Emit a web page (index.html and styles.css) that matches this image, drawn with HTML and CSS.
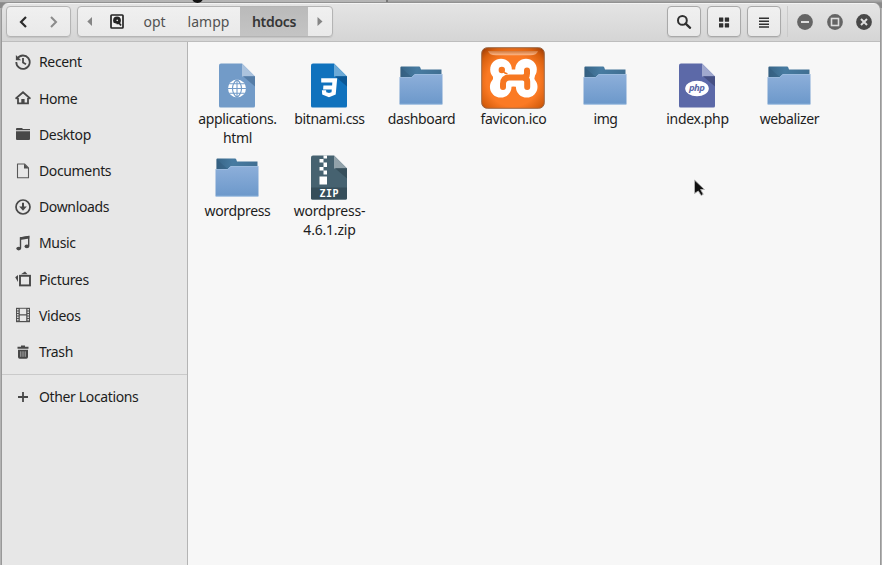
FILE: index.html
```html
<!DOCTYPE html>
<html lang="en">
<head>
<meta charset="utf-8">
<title>htdocs</title>
<link rel="stylesheet" href="styles.css">
</head>
<body>
<svg class="defs" width="0" height="0">
  <defs>
    <linearGradient id="front" x1="0" y1="0" x2="0" y2="1"><stop offset="0" stop-color="#8dafda"/><stop offset="1" stop-color="#6c98ca"/></linearGradient>
    <linearGradient id="back" x1="0" y1="0" x2="1" y2="0"><stop offset="0" stop-color="#386587"/><stop offset=".4" stop-color="#477ba1"/><stop offset="1" stop-color="#416f92"/></linearGradient>
    <radialGradient id="orange" cx=".5" cy=".55" r=".7"><stop offset=".6" stop-color="#fb7a24"/><stop offset=".84" stop-color="#d9600f"/><stop offset="1" stop-color="#a54108"/></radialGradient>
    <linearGradient id="shine" x1="0" y1="0" x2="0" y2="1"><stop offset="0" stop-color="#d07a40"/><stop offset="1" stop-color="#ffb685"/></linearGradient>
    <symbol id="folder" viewBox="0 0 44 40">
      <path d="M1.500 16V2.200Q1.500 1.500 2.200 1.500H20Q21 1.500 21.300 2.500L22 4.500H42.500V16z" fill="url(#back)"/>
      <path d="M1.500 2l11 10H1.500z" fill="#2f5878" opacity=".4"/>
      <path d="M.5 12.200H12.500L15.500 9.200H43.500V39Q43.500 39.500 43 39.500H1Q.5 39.500.5 39z" fill="url(#front)"/>
      <path d="M.5 12.500H12.700L15.700 9.500H43.500M1 39.200H43" fill="none" stroke="#a9c5e6" stroke-width=".7"/>
    </symbol>
  </defs>
</svg>
<div class="backdrop"><span class="tab-edge"></span><span class="tab-dot"></span></div>
<div class="window">
  <header class="bar">
    <div class="group nav">
      <button class="back"><svg width="10" height="14" viewBox="0 0 10 14"><path d="M8 2L3 7l5 5" fill="none" stroke="#2b2b2b" stroke-width="2.2"/></svg></button>
      <button class="forward"><svg width="10" height="14" viewBox="0 0 10 14"><path d="M2 2l5 5-5 5" fill="none" stroke="#8b8b8b" stroke-width="2"/></svg></button>
    </div>
    <div class="group path">
      <button class="arrow"><svg width="6" height="9"><path d="M5 0v9L.3 4.500z" fill="#858585"/></svg></button>
      <button class="disk"><svg width="14" height="15" viewBox="0 0 14 15"><rect x="1" y="1" width="12" height="13" rx=".8" fill="#f2f2f2" stroke="#252525" stroke-width="1.700"/><circle cx="7" cy="6.400" r="3.900" fill="#252525"/><path d="M7.200 6.600l3.800 4.900" stroke="#252525" stroke-width="1.700"/><path d="M2.500 8.500l4.300 1.200-1.300 3.300H2.500z" fill="#f2f2f2"/><path d="M6.200 5.900l1.400-.3.600 1.200-1.200.5z" fill="#f2f2f2"/></svg></button>
      <button class="opt">opt</button>
      <button class="lampp">lampp</button>
      <button class="current">htdocs</button>
      <button class="arrow"><svg width="6" height="9"><path d="M.5 0v9l5-4.500z" fill="#858585"/></svg></button>
    </div>
    <div class="spacer"></div>
    <div class="tools">
      <button class="group tool"><svg width="16" height="16" viewBox="0 0 16 16"><circle cx="6.400" cy="6.400" r="4.400" fill="none" stroke="#303030" stroke-width="2"/><path d="M9.600 9.600l4.500 4.200" stroke="#303030" stroke-width="2.300" stroke-linecap="round"/></svg></button>
      <button class="group tool"><svg width="12" height="12" viewBox="0 0 12 12" fill="#303030"><rect x="1" y="1.400" width="4.300" height="4.300" rx=".4"/><rect x="6.800" y="1.400" width="4.300" height="4.300" rx=".4"/><rect x="1" y="7.200" width="4.300" height="4.300" rx=".4"/><rect x="6.800" y="7.200" width="4.300" height="4.300" rx=".4"/></svg></button>
      <button class="group tool"><svg width="12" height="12" viewBox="0 0 12 12"><path d="M1 2.300h10M1 5.300h10M1 8.300h10M1 11h10" stroke="#303030" stroke-width="1.500"/></svg></button>
    </div>
    <div class="controls">
      <svg width="16" height="16" viewBox="0 0 16 16"><circle cx="8" cy="8" r="7.900" fill="#656565"/><path d="M4 8h8" stroke="#dedede" stroke-width="2"/></svg>
      <svg width="16" height="16" viewBox="0 0 16 16"><circle cx="8" cy="8" r="7.900" fill="#656565"/><rect x="4.500" y="4.500" width="7" height="7" fill="none" stroke="#dedede" stroke-width="1.600"/></svg>
      <svg width="16" height="16" viewBox="0 0 16 16"><circle cx="8" cy="8" r="7.900" fill="#484848"/><path d="M5 5l6 6M11 5l-6 6" stroke="#dedede" stroke-width="2"/></svg>
    </div>
  </header>
  <div class="content">
    <nav class="sidebar">
      <a><svg viewBox="0 0 16 16"><path d="M2.400 4.500A6.700 6.700 0 1 1 1.300 8M8 4v4.500l3 1.800" fill="none" stroke="#484848" stroke-width="1.800"/><path d="M.9 1v5.200h5.200z" fill="#484848"/></svg><span>Recent</span></a>
      <a><svg viewBox="0 0 16 16"><path d="M.5 8.700L8 2.300l7.500 6.400M3 8v5.400h10V8" fill="none" stroke="#484848" stroke-width="1.800"/><path d="M6.300 13V9h3.300v4z" fill="#484848"/></svg><span>Home</span></a>
      <a><svg viewBox="0 0 16 16"><path d="M1 4V3q0-1 1-1h5l1 1h7v1.300H1zM1 5.200h14V13q0 1-1 1H2q-1 0-1-1z" fill="#484848"/></svg><span>Desktop</span></a>
      <a><svg viewBox="0 0 16 16"><path d="M2.500 1h7L13.500 5v9.800h-11z" fill="none" stroke="#585858" stroke-width="1.100" stroke-linejoin="round"/><path d="M9 1v4.500h4.800z" fill="#505050"/></svg><span>Documents</span></a>
      <a><svg viewBox="0 0 16 16"><circle cx="8" cy="8" r="7" fill="none" stroke="#484848" stroke-width="1.700"/><path d="M8 3.700v5" stroke="#484848" stroke-width="2"/><path d="M4.200 7.500h7.600L8 11.800z" fill="#484848"/></svg><span>Downloads</span></a>
      <a><svg viewBox="0 0 16 16"><path d="M5.500 13V2.800l8.200-1.200V11" fill="none" stroke="#484848" stroke-width="1.400"/><path d="M5 2.400l9.300-1.600v2.700L5 4.900z" fill="#484848"/><ellipse cx="3.700" cy="13.600" rx="2.400" ry="1.800" fill="#484848"/><ellipse cx="11.900" cy="11.400" rx="2.400" ry="1.800" fill="#484848"/></svg><span>Music</span></a>
      <a><svg viewBox="0 0 16 16"><rect x="5" y="4.800" width="10" height="9.600" fill="none" stroke="#484848" stroke-width="1.900"/><path d="M6 3.200l4-2.800 2.500 2.800zM3 4v7L.2 6.200z" fill="#484848"/></svg><span>Pictures</span></a>
      <a><svg viewBox="0 0 16 16"><path d="M1 .8h14v14.400H1z" fill="#505050"/><path d="M4.800 1.800h6.400v5.500H4.800zM4.800 8.500h6.400v5.600H4.800z" fill="#e7e7e7"/><path d="M2.800 2v12.500M13.200 2v12.500" stroke="#e7e7e7" stroke-width="1.400" stroke-dasharray="1.600 .9"/></svg><span>Videos</span></a>
      <a><svg viewBox="0 0 16 16"><path d="M6 1.500h4v1.200h3.500v2h-11v-2H6zM3 5.700h10V13q0 1.700-1.700 1.700H4.700Q3 14.700 3 13z" fill="#484848"/><path d="M5.800 7.300v5.500M8 7.300v5.500M10.200 7.300v5.500" stroke="#bcbcbc" stroke-width=".9"/></svg><span>Trash</span></a>
      <hr>
      <a><svg viewBox="0 0 16 16"><path d="M8 3v10M3 8h10" stroke="#484848" stroke-width="1.800"/></svg><span>Other Locations</span></a>
    </nav>
    <main class="files">
      <figure><svg width="36" height="45" viewBox="0 0 36 45"><path d="M2 .5h21L36 13.500V43q0 1.500-1.500 1.500h-33Q0 44.500 0 43V2.300Q0 .5 2 .5z" fill="#729bc8"/><path d="M23 .5l13 13H23z" fill="#abc3de"/><path d="M24 13.300h12V23.500z" fill="#557da7"/><circle cx="18" cy="25.500" r="9" fill="#fff"/><path d="M9 25.500h18M18 16v19M10.500 20.800h15M10.500 30.200h15M18 16.500c-6 5-6 13 0 18M18 16.500c6 5 6 13 0 18" fill="none" stroke="#729bc8" stroke-width="1.100"/></svg><figcaption>applications.<br>html</figcaption></figure>
      <figure><svg width="36" height="45" viewBox="0 0 36 45"><path d="M2 .5h21L36 13.500V43q0 1.500-1.500 1.500h-33Q0 44.500 0 43V2.300Q0 .5 2 .5z" fill="#1072bd"/><path d="M23 .5l13 13H23z" fill="#6caad7"/><path d="M24 13.300h12V23.500z" fill="#0b5795"/><path d="M10.200 15.300h16l-1.500 16.300-6.700 2.700-6.800-2.700-.3-4.300h4.200l.2 2 2.700.7 2.500-.7.300-2.700h-8.700l.3-4.100h8.700l.2-3H10.200z" fill="#fff"/></svg><figcaption>bitnami.css</figcaption></figure>
      <figure><svg class="folder" width="44" height="40"><use href="#folder"/></svg><figcaption>dashboard</figcaption></figure>
      <figure><svg class="favicon" width="64" height="62" viewBox="0 0 64 62"><rect x=".7" y=".7" width="62.600" height="60.600" rx="5.500" fill="url(#orange)" stroke="#9c6a49" stroke-width="1"/><path d="M7 4h50q-1 4.200-8 4.200H15Q8 8.200 7 4z" fill="url(#shine)"/><g fill="#fff"><circle cx="20" cy="22.500" r="10.800"/><circle cx="45" cy="22.500" r="10.800"/><circle cx="19.700" cy="39.800" r="10.800"/><circle cx="45.700" cy="39.800" r="10.800"/><path d="M12 28l2-6h14q4.500 1 9 0h13l4 6-1 6-2 6H37q-4.500-1-9 0H14l-2-6z"/></g><circle cx="20.800" cy="23" r="3.200" fill="#f67721"/><path d="M22 40v-3q0-6.500 6.500-6.500h13q4.500 0 4.500-4V23.500M42 30.500q4 .5 4.200 4v5.500" fill="none" stroke="#f67721" stroke-width="6" stroke-linecap="round" stroke-linejoin="round"/><path d="M23 25q1 1.700 3.500 1.700" fill="none" stroke="#f67721" stroke-width="1.500"/></svg><figcaption>favicon.ico</figcaption></figure>
      <figure><svg class="folder" width="44" height="40"><use href="#folder"/></svg><figcaption>img</figcaption></figure>
      <figure><svg width="36" height="45" viewBox="0 0 36 45"><path d="M2 .5h21L36 13.500V43q0 1.500-1.500 1.500h-33Q0 44.500 0 43V2.300Q0 .5 2 .5z" fill="#5c69a8"/><path d="M23 .5l13 13H23z" fill="#a0a8ce"/><path d="M24 13.300h12V23.500z" fill="#465084"/><ellipse cx="18" cy="25.500" rx="11.800" ry="7.800" fill="#fff"/><text x="17.700" y="28.300" class="php" text-anchor="middle">php</text></svg><figcaption>index.php</figcaption></figure>
      <figure><svg class="folder" width="44" height="40"><use href="#folder"/></svg><figcaption>webalizer</figcaption></figure>
      <figure><svg class="folder" width="44" height="40"><use href="#folder"/></svg><figcaption>wordpress</figcaption></figure>
      <figure><svg width="36" height="45" viewBox="0 0 36 45"><path d="M2 .5h21L36 13.500V43q0 1.500-1.500 1.500h-33Q0 44.500 0 43V2.300Q0 .5 2 .5z" fill="#466270"/><path d="M0 32.500h36V43q0 1.500-1.500 1.500h-33Q0 44.500 0 43z" fill="#364e5a"/><path d="M23 .5l13 13H23z" fill="#92a2aa"/><path d="M24 13.300h12V23.500z" fill="#374f5b"/><path d="M12.500.5h3.500v3h-3.500zM8.500 4h4v3.500h-4zM12.500 7.500H16V12h-3.500zM8.500 12h4v3.500h-4zM12.500 15.500H16v4h-3.500zM8.500 21.500H16v8H8.500z" fill="#fff"/><text x="18.200" y="42.300" class="zip" text-anchor="middle">ZIP</text></svg><figcaption class="wide">wordpress-<br>4.6.1.zip</figcaption></figure>
    </main>
  </div>
</div>
<svg class="pointer" width="14" height="18" viewBox="0 0 14 18"><path d="M1.500 1l10 9.500H7.600l2.700 4.800-2.200 1.200L5.300 12l-3.800 2.500z" fill="#111" stroke="#b5b5b5" stroke-width=".9"/></svg>
</body>
</html>
```

FILE: styles.css
```css
* { box-sizing: border-box; }
body {
  margin: 0;
  width: 882px;
  height: 565px;
  overflow: hidden;
  background: #b3b3b3;
  color: #1d1d1d;
  font: 14px/19px "Noto Sans", "Open Sans", sans-serif;
}
.defs { position: absolute; }
.backdrop {
  position: absolute;
  inset: 0 0 auto;
  height: 8px;
  background: linear-gradient(#aaa 0 1px, #999 2px, #8a8a8a 3px);
}
.tab-edge {
  position: absolute;
  left: 0;
  width: 388px;
  height: 2px;
  background: #b5b5b5;
  border-right: 2px solid #777;
}
.tab-dot {
  position: absolute;
  left: 192px;
  top: -7px;
  width: 11px;
  height: 10px;
  border-radius: 50%;
  background: #151515;
}
.window {
  position: relative;
  width: 880px;
  height: 562px;
  margin: 3px 1px 0;
  display: flex;
  flex-direction: column;
  border: solid #999;
  border-width: 0 1px;
  border-radius: 7px 7px 0 0;
  overflow: hidden;
}
.bar {
  height: 39px;
  flex: none;
  display: flex;
  align-items: flex-start;
  padding: 2px 8px 0 4px;
  background: linear-gradient(#e4e4e4, #d5d5d5);
  border-top: 1px solid #f3f3f3;
  border-bottom: 1px solid #bdbdbd;
}
button {
  display: flex;
  align-items: center;
  justify-content: center;
  height: 100%;
  padding: 0;
  border: 0;
  background: none;
  color: #525252;
  font: inherit;
}
.group {
  display: flex;
  height: 31px;
  border: 1px solid #a9a9a9;
  border-radius: 4px;
  background: linear-gradient(#f0f0f0, #e9e9e9);
  box-shadow: 0 1px 1px #c4c4c4;
  overflow: hidden;
}
.nav { width: 65px; margin-right: 6px; border-color: #b4b4b4; }
.nav button { flex: 1; }
.path { width: 256px; border-color: #b4b4b4; }
.path button { padding-bottom: 1px; }
.arrow { width: 23px; }
.disk { width: 31px; }
.opt { width: 45px; }
.lampp { width: 63px; }
.current { width: 68px; background: linear-gradient(#bababa, #c4c4c4); color: #353535; font-weight: 600; letter-spacing: -.3px; }
.spacer { flex: 1; }
.tools { display: flex; gap: 6px; padding-right: 6px; border-right: 1px solid #cbcbcb; }
.tool { width: 34px; }
.controls { display: flex; gap: 13.500px; padding: 7.500px 0 0 9px; }
.content { flex: 1; display: flex; min-height: 0; }
.sidebar {
  width: 186px;
  flex: none;
  padding-top: 2px;
  border-right: 1px solid #b4b4b4;
  background: #e7e7e7;
}
.sidebar a { display: flex; align-items: center; height: 36.200px; padding-left: 13px; gap: 8px; }
.sidebar svg { width: 16px; height: 16px; }
.sidebar span { letter-spacing: -.36px; margin-top: -.4px; }
.sidebar hr { height: 1px; margin: 4px 0; border: 0; background: #cacaca; }
.files {
  flex: 1;
  display: grid;
  grid-template-columns: repeat(7, 92px);
  grid-auto-rows: 92px;
  align-content: start;
  padding: 5px 0 0 3px;
  background: #f7f7f7;
}
figure { margin: 0; display: flex; flex-direction: column; align-items: center; padding-top: 16px; }
figure svg { flex: none; margin-bottom: 1px; }
figure .folder { margin: 2px 0 4px; }
figure .favicon { margin: -16px 0 0; }
figcaption { padding-left: 1px; text-align: center; white-space: nowrap; letter-spacing: -.36px; }
figcaption.wide { letter-spacing: -.2px; }
.php { font: italic 700 9.500px "Noto Sans", sans-serif; fill: #5c69a8; letter-spacing: -.6px; }
.zip { font: 700 10px "DejaVu Sans Mono", monospace; fill: #fff; letter-spacing: .5px; }
.pointer { position: absolute; left: 693px; top: 179px; }
```
